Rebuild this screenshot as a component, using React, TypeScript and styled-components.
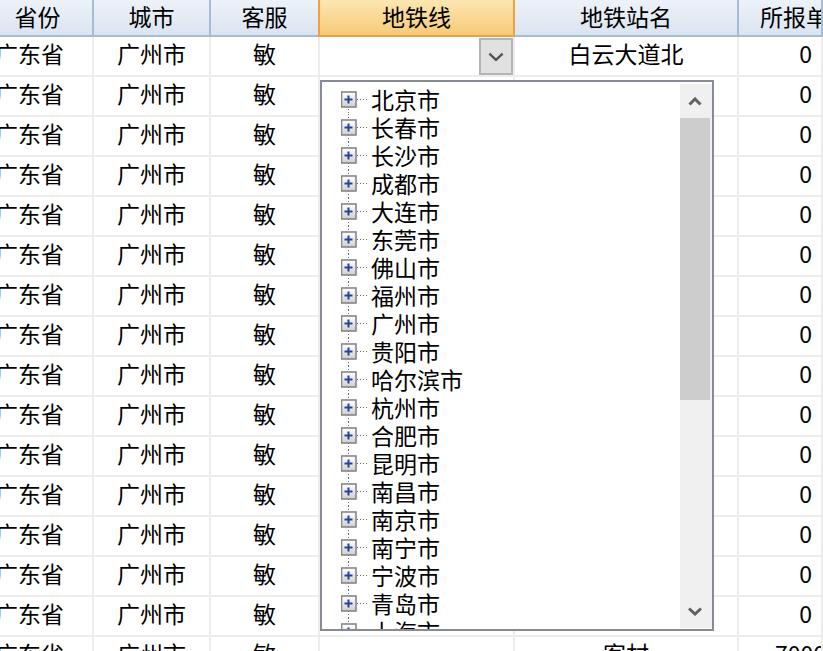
import React from "react";
import styled, { createGlobalStyle } from "styled-components";

const Global = createGlobalStyle`
  html, body { margin: 0; padding: 0; background: #fff; overflow: hidden; }
  body { font-family: "Noto Sans CJK SC", "Noto Sans", sans-serif; }
`;

const COLS = [111, 117, 109, 195, 224, 84];

const Page = styled.div`
  position: relative;
  width: 823px;
  height: 651px;
  overflow: hidden;
`;

const Grid = styled.div`
  margin-left: -17px;
  display: grid;
  grid-template-columns: ${COLS.map((c) => c + "px").join(" ")};
  grid-auto-rows: 40px;
  grid-template-rows: 37px;
`;

const HeadCell = styled.div<{ $active?: boolean; $left?: boolean }>`
  box-sizing: border-box;
  height: 37px;
  display: flex;
  align-items: center;
  justify-content: ${(p) => (p.$left ? "flex-start" : "center")};
  padding: 0 0 4px ${(p) => (p.$left ? "21px" : "0")};
  font-size: 23px;
  color: #000;
  white-space: nowrap;
  overflow: hidden;
  background: ${(p) =>
    p.$active
      ? "linear-gradient(#fce6b2, #f7ca78)"
      : "linear-gradient(#edf2f9, #dae4f0)"};
  border-bottom: 2px solid ${(p) => (p.$active ? "#f0a040" : "#a4bcd7")};
  border-right: 2px solid ${(p) => (p.$active ? "#f0a040" : "#a4bcd7")};
  ${(p) => (p.$active ? "border-left: 2px solid #f0a040; margin-left: -2px;" : "")}
`;

const Cell = styled.div<{ $align?: "left" | "center" | "right"; $shift?: number }>`
  position: relative;
  box-sizing: border-box;
  height: 40px;
  display: flex;
  align-items: center;
  justify-content: ${(p) =>
    p.$align === "right" ? "flex-end" : p.$align === "left" ? "flex-start" : "center"};
  padding: 0 ${(p) => (p.$align === "right" ? "9px" : "0")} 6px
    ${(p) => (p.$align === "left" ? "36px" : "0")};
  ${(p) => (p.$shift ? `padding-right: ${p.$shift}px;` : "")}
  font-size: 23px;
  color: #000;
  white-space: nowrap;
  overflow: hidden;
  border-right: 2px solid #ededed;
  border-bottom: 2px solid #ededed;
`;

const DropButton = styled.div`
  position: absolute;
  right: 0;
  top: 1px;
  box-sizing: border-box;
  width: 34px;
  height: 37px;
  background: #e1e1e1;
  border: 2px solid #b4b4b4;
  display: flex;
  align-items: center;
  justify-content: center;
`;

const Popup = styled.div`
  position: absolute;
  left: 320px;
  top: 80px;
  width: 394px;
  height: 551px;
  box-sizing: border-box;
  border: 2px solid #878b95;
  background: #fff;
  display: flex;
`;

const TreeList = styled.div`
  flex: 1;
  overflow: hidden;
  padding: 4px 0 0 19px;
`;

const TreeRow = styled.div`
  height: 28px;
  display: flex;
  align-items: center;
  font-size: 23px;
  line-height: 24px;
  color: #000;
  white-space: nowrap;
`;

const Label = styled.span`
  margin-top: -3px;
  margin-left: -1px;
`;

const ScrollBar = styled.div`
  width: 32px;
  margin: 2px 0 1px 0;
  background: #f0f0f0;
  display: flex;
  flex-direction: column;
`;

const ScrollArrow = styled.div`
  height: 34px;
  display: flex;
  align-items: center;
  justify-content: center;
  padding-right: 2px;
`;

const Thumb = styled.div`
  height: 282px;
  width: 30px;
  background: #cdcdcd;
`;

const Track = styled.div`
  flex: 1;
`;

const Expander = ({ first }: { first?: boolean }) => (
  <svg width="31" height="28" viewBox="0 0 31 28" style={{ flex: "none" }}>
    <line
      x1="7.5"
      y1={first ? 14 : 0}
      x2="7.5"
      y2="28"
      stroke="#6a6a6a"
      strokeWidth="1"
      strokeDasharray="1 2"
    />
    <line x1="16" y1="13.5" x2="28" y2="13.5" stroke="#6a6a6a" strokeWidth="1" strokeDasharray="1 2" />
    <defs>
      <linearGradient id="bx" x1="0" y1="0" x2="0" y2="1">
        <stop offset="0" stopColor="#ffffff" />
        <stop offset="1" stopColor="#cfcfcf" />
      </linearGradient>
    </defs>
    <rect x="0.5" y="6" width="14.5" height="15" fill="url(#bx)" stroke="#868686" strokeWidth="1.6" />
    <line x1="3.5" y1="13.5" x2="11.5" y2="13.5" stroke="#24449a" strokeWidth="2" />
    <line x1="7.5" y1="9.5" x2="7.5" y2="17.5" stroke="#24449a" strokeWidth="2" />
  </svg>
);

const ChevronDown = ({ w = 14, color = "#555", sw = 2.2 }: { w?: number; color?: string; sw?: number }) => (
  <svg width={w} height={w / 2 + 2} viewBox="0 0 14 9">
    <polyline points="1,1.5 7,7 13,1.5" fill="none" stroke={color} strokeWidth={sw} />
  </svg>
);

const ChevronUp = ({ color = "#606060" }: { color?: string }) => (
  <svg width="14" height="9" viewBox="0 0 14 9">
    <polyline points="1.5,7.5 7,2 12.5,7.5" fill="none" stroke={color} strokeWidth="3" />
  </svg>
);

const cities = [
  "北京市", "长春市", "长沙市", "成都市", "大连市", "东莞市", "佛山市", "福州市",
  "广州市", "贵阳市", "哈尔滨市", "杭州市", "合肥市", "昆明市", "南昌市", "南京市",
  "南宁市", "宁波市", "青岛市", "上海市",
];

const headers = ["省份", "城市", "客服", "地铁线", "地铁站名", "所报单位"];

export default function App() {
  const rows = Array.from({ length: 15 }, (_, i) => i);
  return (
    <Page>
      <Global />
      <Grid>
        {headers.map((h, i) => (
          <HeadCell key={h} $active={i === 3} $left={i === 5}>
            {h}
          </HeadCell>
        ))}
        {rows.map((i) => (
          <React.Fragment key={i}>
            <Cell $shift={16}>广东省</Cell>
            <Cell>广州市</Cell>
            <Cell>敏</Cell>
            <Cell>
              {i === 0 && (
                <DropButton>
                  <ChevronDown w={16} />
                </DropButton>
              )}
            </Cell>
            <Cell>{i === 0 ? "白云大道北" : ""}</Cell>
            <Cell $align="right">0</Cell>
          </React.Fragment>
        ))}
        <Cell $shift={16}>广东省</Cell>
        <Cell>广州市</Cell>
        <Cell>敏</Cell>
        <Cell />
        <Cell>客村</Cell>
        <Cell $align="left">7000</Cell>
      </Grid>
      <Popup>
        <TreeList>
          {cities.map((c, i) => (
            <TreeRow key={c}>
              <Expander first={i === 0} />
              <Label>{c}</Label>
            </TreeRow>
          ))}
        </TreeList>
        <ScrollBar>
          <ScrollArrow>
            <ChevronUp />
          </ScrollArrow>
          <Thumb />
          <Track />
          <ScrollArrow>
            <ChevronDown w={14} color="#606060" sw={3} />
          </ScrollArrow>
        </ScrollBar>
      </Popup>
    </Page>
  );
}
